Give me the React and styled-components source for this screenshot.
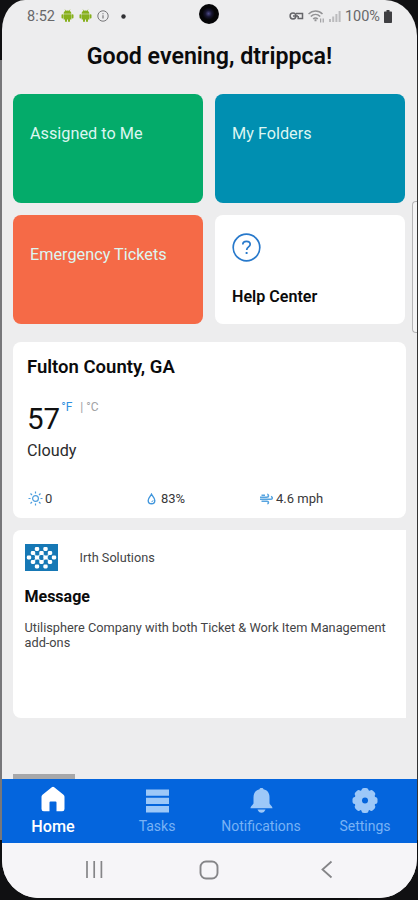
import React from 'react';
import styled, { createGlobalStyle } from 'styled-components';

const GlobalStyle = createGlobalStyle`
    * {
        box-sizing: border-box;
    }

    body {
        margin: 0;
        background: #08080a;
        font-family: Roboto, "Liberation Sans", sans-serif;
        overflow: hidden;
    }

    svg {
        display: block;
        flex: none;
    }
`;

const Phone = styled.div`
    position: relative;
    width: 418px;
    height: 900px;
    padding: 0 1px 2px 2px;
    background: linear-gradient(90deg, #77777a 0, #77777a 2px, #141416 3px, #0a0a0c 410px, #333 417px);
    overflow: hidden;
`;

const Screen = styled.div`
    position: relative;
    display: flex;
    flex-direction: column;
    height: 898px;
    background: #ededee;
    border-radius: 23px 32px 38px 36px / 30px 36px 40px 38px;
    overflow: hidden;
`;

const Corner = styled.div`
    position: absolute;
    width: 60px;
    height: 60px;
    background: #101012;
    ${(props) => (props.$top ? 'top: 0;' : 'bottom: 0;')}
    ${(props) => (props.$right ? 'right: 0;' : 'left: 0;')}
`;

const StatusBar = styled.div`
    display: flex;
    align-items: center;
    height: 32px;
    padding: 0 25px;
    color: #68686a;
    font-size: 14.5px;
`;

const StatusGroup = styled.div`
    display: flex;
    align-items: center;
    gap: ${(props) => props.$gap}px;
`;

const Spacer = styled.div`
    flex: 1;
`;

const Camera = styled.div`
    position: absolute;
    top: 4px;
    left: 197px;
    width: 20px;
    height: 20px;
    border-radius: 50%;
    background: radial-gradient(circle at 48% 48%, #4c4a86 0, #17152f 22%, #050507 42%);
`;

const EdgeHandle = styled.div`
    position: absolute;
    top: 201px;
    right: 0;
    width: 5px;
    height: 132px;
    background: #f3f3f4;
    border: 1px solid #b5b5b7;
    border-right: none;
    border-radius: 4px 0 0 4px;
`;

const Greeting = styled.h1`
    margin: 0;
    height: 62px;
    padding-top: 10px;
    font-size: 23.2px;
    line-height: 28px;
    font-weight: 600;
    text-align: center;
    color: #0b0b0c;
`;

const Main = styled.main`
    flex: 1;
    padding: 0 11px;
`;

const Tiles = styled.div`
    display: grid;
    grid-template-columns: 190px 190px;
    grid-auto-rows: 109px;
    gap: 12px;
    margin-bottom: 18px;
`;

const Tile = styled.div`
    padding: 30px 17px;
    border-radius: 8px;
    background: ${(props) => props.$color};
    color: #dcf6f1;
    font-size: 16.25px;
    line-height: 19px;
`;

const HelpTile = styled(Tile)`
    display: flex;
    flex-direction: column;
    justify-content: space-between;
    padding: 18px 17px 18px;
    color: #0b0b0c;
    font-size: 16.1px;
    font-weight: 600;
`;

const Card = styled.section`
    width: 393px;
    height: ${(props) => props.$height}px;
    margin-bottom: 12px;
    background: #fff;
    border-radius: ${(props) => (props.$flatRight ? '8px 0 0 8px' : '8px')};
`;

const WeatherCard = styled(Card)`
    padding: 14px 14px 0;
`;

const County = styled.h2`
    margin: 0 0 17px;
    font-size: 18.5px;
    line-height: 22px;
    font-weight: 600;
    color: #0b0b0c;
`;

const Temperature = styled.div`
    display: flex;
    height: 44px;
    font-size: 29.5px;
    line-height: 49px;
    color: #111;
`;

const Unit = styled.span`
    margin-left: ${(props) => props.$left}px;
    font-size: 12px;
    line-height: 25px;
    color: ${(props) => (props.$active ? '#2f8fe0' : '#a2a2a4')};
`;

const Condition = styled.div`
    font-size: 16.2px;
    line-height: 23px;
    color: #2b2b2d;
`;

const Metrics = styled.div`
    display: grid;
    grid-template-columns: 118px 114px 1fr;
    margin-top: 28px;
`;

const Metric = styled.div`
    display: flex;
    align-items: center;
    gap: ${(props) => props.$gap}px;
    height: 17px;
    padding-left: ${(props) => props.$inset}px;
    color: #38383a;
    font-size: 13px;
`;

const MessageCard = styled(Card)`
    padding: 13px 11.5px 0;
`;

const Sender = styled.div`
    display: flex;
    align-items: center;
    gap: 22px;
    height: 28px;
    font-size: 12.7px;
    color: #444446;
`;

const MessageTitle = styled.h3`
    margin: 16px 0 13px;
    font-size: 16px;
    line-height: 20px;
    font-weight: 700;
    color: #0b0b0c;
`;

const MessageText = styled.p`
    margin: 0;
    font-size: 12.75px;
    line-height: 15px;
    color: #444446;
`;

const ScrollThumb = styled.div`
    width: 62px;
    height: 5px;
    margin-left: 11px;
    background: #a7a8aa;
`;

const TabBar = styled.nav`
    display: grid;
    grid-template-columns: repeat(4, 104px);
    height: 64px;
    margin-left: -1px;
    background: #0465dd;
`;

const Tab = styled.div`
    display: flex;
    flex-direction: column;
    align-items: center;
    padding-top: ${(props) => (props.$active ? 6 : 7)}px;
    gap: ${(props) => (props.$active ? 4 : 3)}px;
    color: ${(props) => (props.$active ? '#fff' : '#78b2f5')};
    font-size: ${(props) => (props.$active ? 16.2 : 14)}px;
    font-weight: ${(props) => (props.$active ? 500 : 400)};
    line-height: 21px;
`;

const SystemBar = styled.div`
    display: flex;
    height: 55px;
    padding: 17px 84px 0 83px;
    justify-content: space-between;
    background: #f6f5f8;
`;

const AndroidIcon = () => (
    <svg width="13" height="14" viewBox="0 0 13 14" fill="#86b01c">
        <path d="M2.600 4.800C2.600 2.600 4.300 1.500 6.500 1.500s3.900 1.100 3.900 3.300zM2.600 5.200h7.800v5.300H2.600z" />
        <rect x=".5" y="5.200" width="1.900" height="4.300" rx=".9" />
        <rect x="10.600" y="5.200" width="1.900" height="4.300" rx=".9" />
        <path d="M4 10h2v2.800H4zM7 10h2v2.800H7z" />
        <path d="M4 .7l1 1.500M9 .7L8 2.200" stroke="#86b01c" strokeWidth=".7" />
    </svg>
);

const InfoIcon = () => (
    <svg width="12" height="12" viewBox="0 0 12 12" fill="none" stroke="#777779">
        <circle cx="6" cy="6" r="5.200" />
        <path d="M6 5.200v3.300M6 3.200v1" strokeWidth="1.200" />
    </svg>
);

const DotIcon = () => (
    <svg width="5" height="5" viewBox="0 0 5 5">
        <circle cx="2.500" cy="2.500" r="2.200" fill="#303033" />
    </svg>
);

const KeyIcon = () => (
    <svg width="15" height="10" viewBox="0 0 15 10" fill="none" stroke="#66666a" strokeWidth="1.500">
        <circle cx="4" cy="5" r="2.900" />
        <path d="M4 5h5M7 2.500h6.500v5H9.200V5" />
    </svg>
);

const WifiIcon = () => (
    <svg width="17" height="13" viewBox="0 0 17 13" fill="none" stroke="#929294" strokeWidth="1.500">
        <path d="M.5 4c4-4 10-4 14 0M2.800 6.500c2.800-2.700 6.600-2.700 9.400 0M5.200 9c1.300-1.300 3.300-1.300 4.600 0" />
        <path d="M7.500 9.300v2" strokeWidth="2" />
        <path d="M12.700 8.500v4M15.200 8.500v4" strokeWidth="1" />
    </svg>
);

const SignalIcon = () => (
    <svg width="12" height="12" viewBox="0 0 12 12" fill="#bbbbbd">
        <path d="M0 9h2v3H0zM3.200 6.500h2V12h-2zM6.400 4h2v8h-2zM9.600 1h2v11h-2z" />
    </svg>
);

const BatteryIcon = () => (
    <svg width="8" height="13" viewBox="0 0 8 13" fill="#3f3f42">
        <path d="M2.500 0h3v1.500H7c.6 0 1 .4 1 1V12c0 .6-.4 1-1 1H1c-.6 0-1-.4-1-1V2.500c0-.6.4-1 1-1h1.500z" />
    </svg>
);

const HelpIcon = () => (
    <svg width="29" height="29" viewBox="0 0 29 29" fill="none" stroke="#2879cb">
        <circle cx="14.500" cy="14.500" r="13.300" strokeWidth="1.700" />
        <path d="M10.800 11.600c0-2.100 1.500-3.300 3.700-3.300s3.700 1.200 3.700 3c0 2.600-3.500 2.600-3.500 5.700" strokeWidth="1.700" />
        <path d="M14.600 18.900v2" strokeWidth="1.900" />
    </svg>
);

const SunIcon = () => (
    <svg width="15" height="15" viewBox="0 0 15 15" fill="none" stroke="#4d9ede" strokeWidth="1.200">
        <circle cx="7.500" cy="7.500" r="2.900" />
        <path d="M7.500.5v2M7.500 12.500v2M.5 7.500h2M12.500 7.500h2M2.500 2.500L4 4M11 11l1.500 1.500M12.500 2.500L11 4M4 11l-1.500 1.500" />
    </svg>
);

const DropIcon = () => (
    <svg width="9" height="12" viewBox="0 0 9 12" fill="none" stroke="#4196dc" strokeWidth="1.400">
        <path d="M4.500 1.200C3.500 3.300 1.200 5 1.200 7.400c0 2 1.400 3.300 3.300 3.300s3.300-1.300 3.300-3.300c0-2.400-2.300-4.100-3.300-6.200z" />
        <path d="M4.500 8.700c1 0 1.500-.5 1.500-1.400" strokeWidth="1" />
    </svg>
);

const WindIcon = () => (
    <svg width="13" height="12" viewBox="0 0 13 12" fill="none" stroke="#57a4e0" strokeWidth="1.500">
        <path d="M0 4.300h6.500c1.500 0 2-.7 2-1.500S7.900 1.300 7.200 1.300M0 6.300h10.500c1.200 0 1.800-.6 1.800-1.400s-.6-1.300-1.400-1.300M1.500 8.300H7c1 0 1.500.5 1.500 1.200S8 10.800 7.300 10.800M1.500 2.300H5" />
    </svg>
);

// rows of dots forming the diamond weave
const LOGO_ROWS = [
    { y: 5, xs: [12, 20.500] },
    { y: 9, xs: [8, 16.500, 25] },
    { y: 13.500, xs: [4, 12, 20.500, 29] },
    { y: 18, xs: [8, 16.500, 25] },
    { y: 22.500, xs: [12, 20.500] },
];

const IrthLogo = () => (
    <svg width="33" height="27" viewBox="0 0 33 27">
        <rect width="33" height="27" fill="#1678b5" />
        <path
            d="M8 9l4.300 4.500L16.500 18l4.500-4.500L25 9M8 18l4.300-4.500L16.500 9l4.500 4.500L25 18"
            fill="none"
            stroke="#a9d4ec"
            strokeWidth="1.500"
        />
        {LOGO_ROWS.map((row) =>
            row.xs.map((x) => (
                <rect key={`${x}-${row.y}`} x={x - 2.200} y={row.y - 1.900} width="4.400" height="3.800" rx="1.300" fill="#fff" />
            ))
        )}
    </svg>
);

const HomeIcon = () => (
    <svg width="26" height="27" viewBox="0 0 26 27" fill="#fff">
        <path d="M11.800 2.300q1.200-1 2.400 0l9.300 7.400q1 .9 1 2v12.200q0 2.300-2.300 2.300h-5.700v-8.700q0-1-1-1h-5q-1 0-1 1v8.700H3.800q-2.300 0-2.300-2.300V11.700q0-1.100 1-2z" />
    </svg>
);

const TasksIcon = () => (
    <svg width="23" height="27" viewBox="0 0 23 27" fill="#9dc8f8">
        <path d="M0 3.500h23v6.300H0zM0 11.800h23v6.300H0zM0 20.100h23v6.300H0z" />
    </svg>
);

const BellIcon = () => (
    <svg width="23" height="27" viewBox="0 0 23 27" fill="#9dc8f8">
        <path d="M11.500 2c1.200 0 1.900.5 2 1.300 4 .9 6 3.800 6 8.200v5.500c0 1.800 3 2.800 3 5.300H.5c0-2.500 3-3.500 3-5.300v-5.500c0-4.400 2-7.300 6-8.200.1-.8.8-1.300 2-1.300z" />
        <path d="M7.500 23.500h8c-.7 2-2.200 3.300-4 3.300s-3.300-1.300-4-3.300z" />
    </svg>
);

const GearIcon = () => (
    <svg width="26" height="27" viewBox="0 0 26 27">
        <g fill="#9dc8f8">
            {[0, 45, 90, 135].map((angle) => (
                <rect key={angle} x="9.500" y="2" width="7" height="25" rx="2.500" transform={`rotate(${angle} 13 14.500)`} />
            ))}
            <circle cx="13" cy="14.500" r="10.700" />
        </g>
        <circle cx="13" cy="14.500" r="3" fill="#0465dd" />
    </svg>
);

const RecentsIcon = () => (
    <svg width="19" height="19" viewBox="0 0 19 19" fill="none" stroke="#858588" strokeWidth="1.700">
        <path d="M2 1v17M9.200 1v17M16.400 1v17" />
    </svg>
);

const HomeButtonIcon = () => (
    <svg width="20" height="20" viewBox="0 0 20 20" fill="none" stroke="#858588" strokeWidth="1.900">
        <rect x="1.500" y="1.500" width="17" height="17" rx="5.500" />
    </svg>
);

const BackIcon = () => (
    <svg width="12" height="19" viewBox="0 0 12 19" fill="none" stroke="#858588" strokeWidth="1.800">
        <path d="M10.500 1.500l-9 8 9 8" />
    </svg>
);

const tabs = [
    { label: 'Home', icon: <HomeIcon />, active: true },
    { label: 'Tasks', icon: <TasksIcon /> },
    { label: 'Notifications', icon: <BellIcon /> },
    { label: 'Settings', icon: <GearIcon /> },
];

const NotificationIcons = styled(StatusGroup)`
    margin-left: 6px;
    margin-right: 12px;
`;

const NavGroup = styled.div`
    display: flex;
    flex: 1;
    justify-content: space-between;
    padding-right: 102px;
`;

const App = () => {
    return (
        <Phone>
            <GlobalStyle />
            <Corner $top />
            <Corner $top $right />
            <Corner />
            <Corner $right />
            <Screen>
                <StatusBar>
                    <span>8:52</span>
                    <NotificationIcons $gap={5}>
                        <AndroidIcon />
                        <AndroidIcon />
                        <InfoIcon />
                    </NotificationIcons>
                    <DotIcon />
                    <Spacer />
                    <StatusGroup $gap={4}>
                        <KeyIcon />
                        <WifiIcon />
                        <SignalIcon />
                        <span>100%</span>
                        <BatteryIcon />
                    </StatusGroup>
                </StatusBar>
                <Greeting>Good evening, dtrippca!</Greeting>
                <Main>
                    <Tiles>
                        <Tile $color="#04ab6a">Assigned to Me</Tile>
                        <Tile $color="#008fb1">My Folders</Tile>
                        <Tile $color="#f56a47">Emergency Tickets</Tile>
                        <HelpTile $color="#fff">
                            <HelpIcon />
                            Help Center
                        </HelpTile>
                    </Tiles>
                    <WeatherCard $height={176}>
                        <County>Fulton County, GA</County>
                        <Temperature>
                            57
                            <Unit $active $left={1}>°F</Unit>
                            <Unit $left={8}>| °C</Unit>
                        </Temperature>
                        <Condition>Cloudy</Condition>
                        <Metrics>
                            <Metric $inset={1} $gap={2}>
                                <SunIcon />0
                            </Metric>
                            <Metric $inset={2} $gap={5}>
                                <DropIcon />
                                83%
                            </Metric>
                            <Metric $inset={1} $gap={3}>
                                <WindIcon />
                                4.6 mph
                            </Metric>
                        </Metrics>
                    </WeatherCard>
                    <MessageCard $height={188} $flatRight>
                        <Sender>
                            <IrthLogo />
                            Irth Solutions
                        </Sender>
                        <MessageTitle>Message</MessageTitle>
                        <MessageText>
                            Utilisphere Company with both Ticket &amp; Work Item Management add-ons
                        </MessageText>
                    </MessageCard>
                </Main>
                <ScrollThumb />
                <TabBar>
                    {tabs.map((tab) => (
                        <Tab key={tab.label} $active={tab.active}>
                            {tab.icon}
                            {tab.label}
                        </Tab>
                    ))}
                </TabBar>
                <SystemBar>
                    <NavGroup>
                        <RecentsIcon />
                        <HomeButtonIcon />
                    </NavGroup>
                    <BackIcon />
                </SystemBar>
                <Camera />
                <EdgeHandle />
            </Screen>
        </Phone>
    );
};

export default App;
